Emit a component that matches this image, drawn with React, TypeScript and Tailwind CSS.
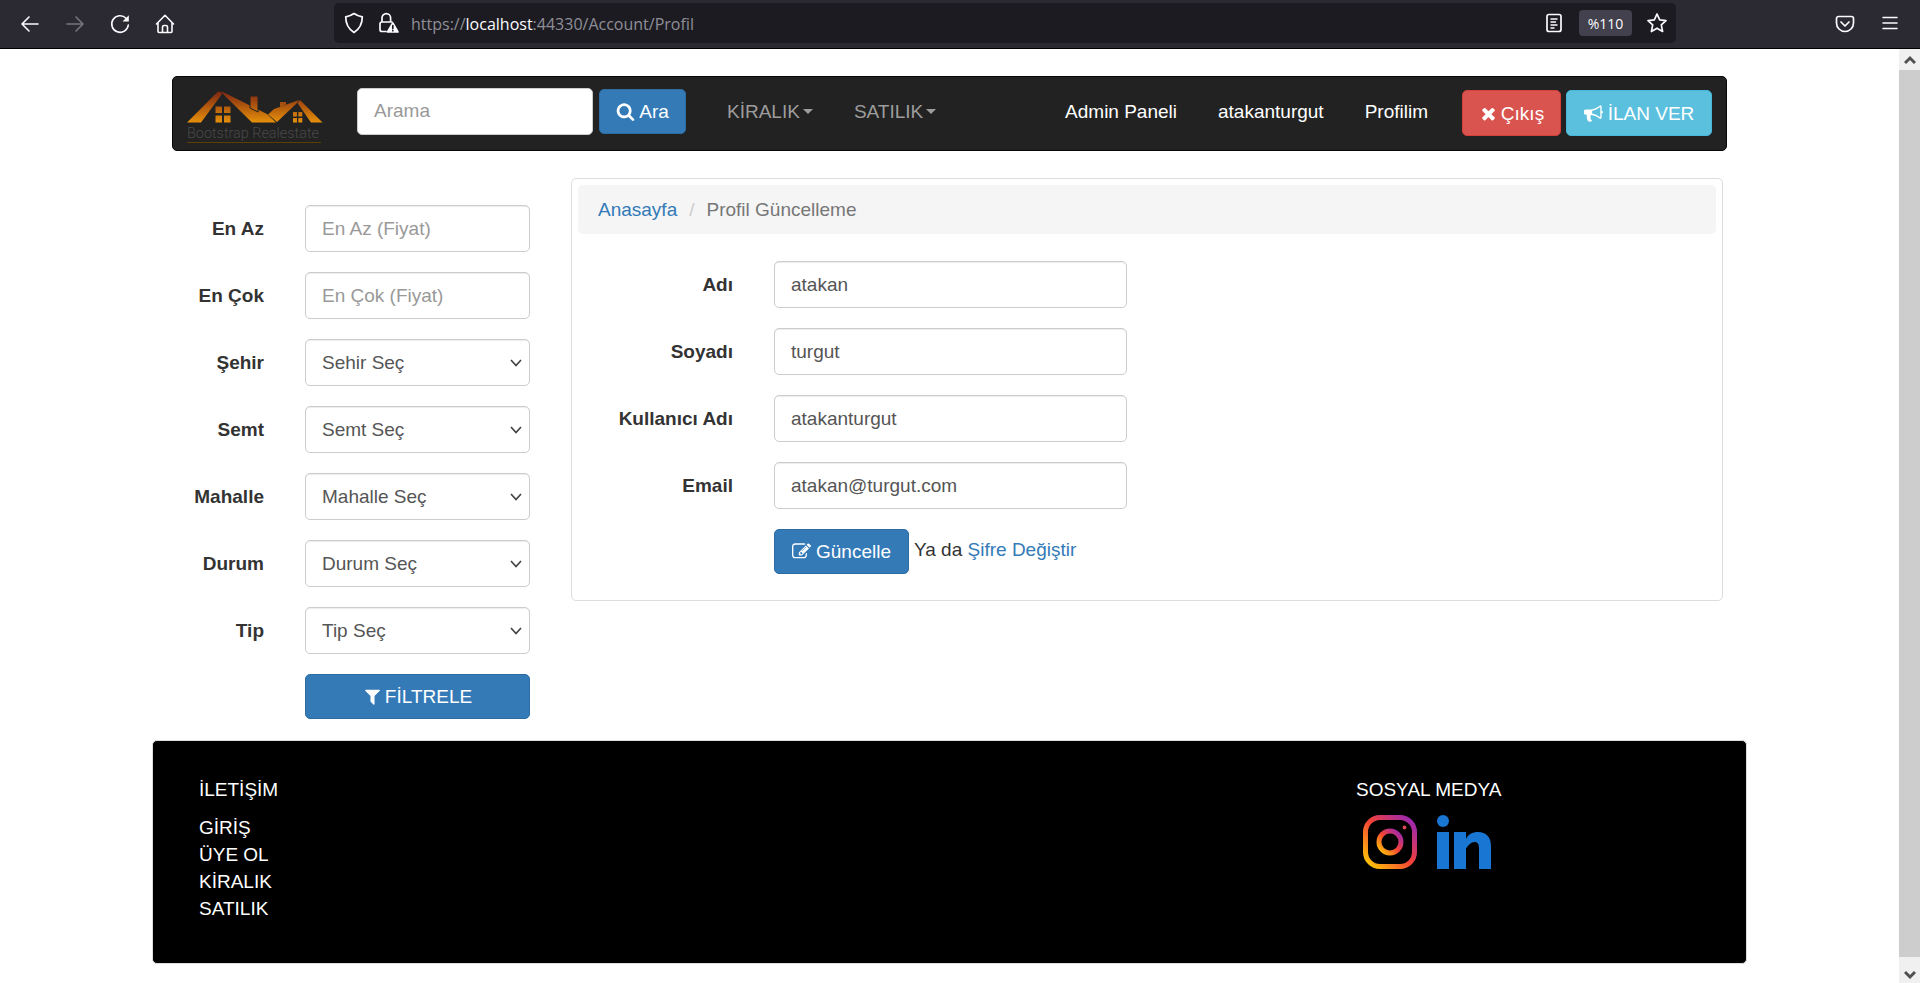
import React from "react";

function Chevron({ up = false }: { up?: boolean }) {
  return (
    <svg viewBox="0 0 12 12" className="h-3 w-3" fill="none" stroke="#505050" strokeWidth="3" aria-hidden="true">
      <path d={up ? "M1 9 6 4l5 5" : "M1 3l5 5 5-5"} />
    </svg>
  );
}

const glyphs = {
  search:
    "M1216 832q0-185-131.500-316.500t-316.500-131.500-316.500 131.500-131.500 316.500 131.500 316.500 316.500 131.500 316.500-131.500 131.500-316.500zm512 832q0 52-38 90t-90 38q-54 0-90-38l-343-342q-179 124-399 124-143 0-273.500-55.500t-225-150-150-225-55.500-273.500 55.500-273.500 150-225 225-150 273.500-55.500 273.500 55.500 225 150 150 225 55.500 273.500q0 220-124 399l343 343q37 37 37 90z",
  times:
    "M1490 1322q0 40-28 68l-136 136q-28 28-68 28t-68-28l-294-294-294 294q-28 28-68 28t-68-28l-136-136q-28-28-28-68t28-68l294-294-294-294q-28-28-28-68t28-68l136-136q28-28 68-28t68 28l294 294 294-294q28-28 68-28t68 28l136 136q28 28 28 68t-28 68l-294 294 294 294q28 28 28 68z",
  bullhorn:
    "M1664 640q53 0 90.500 37.500t37.500 90.500-37.500 90.500-90.500 37.500v384q0 52-38 90t-90 38q-417-347-812-380-58 19-91 66t-31 100.500 40 92.500q-20 33-23 65.500t6 58 33.500 55 48 50 61.500 50.500q-29 58-111.500 83t-168.500 11.500-132-55.500q-7-23-29.500-87.500t-32-94.500-23-89-15-101 3.500-98.500 22-110.500h-122q-66 0-113-47t-47-113v-192q0-66 47-113t113-47h480q435 0 896-384 52 0 90 38t38 90v384zm-128 604v-954q-394 302-768 343v270q377 42 768 341z",
  filter:
    "M1595 295q17 41-14 70l-493 493v742q0 42-39 59-13 5-25 5-27 0-45-19l-256-256q-19-19-19-45v-486l-493-493q-31-29-14-70 17-39 59-39h1280q42 0 59 39z",
  edit:
    "M888 1184l116-116-152-152-116 116v56h96v96h56zm440-720q-16-16-33 1l-350 350q-17 17-1 33t33-1l350-350q17-17 1-33zm80 594v190q0 119-84.500 203.500t-203.500 84.500h-832q-119 0-203.500-84.500t-84.500-203.500v-832q0-119 84.500-203.500t203.500-84.500h832q63 0 117 25 15 7 18 23 3 17-9 29l-49 49q-14 14-32 8-23-6-45-6h-832q-66 0-113 47t-47 113v832q0 66 47 113t113 47h832q66 0 113-47t47-113v-126q0-13 9-22l64-64q15-15 35-7t20 29zm-96-738l288 288-672 672h-288v-288zm444 132l-92 92-288-288 92-92q28-28 68-28t68 28l152 152q28 28 28 68t-28 68z",
};

function Glyph({ name }: { name: keyof typeof glyphs }) {
  return (
    <svg viewBox="0 0 1792 1792" className="h-[19px] w-[19px]" fill="currentColor" aria-hidden="true">
      <path d={glyphs[name]} />
    </svg>
  );
}

const iconButton = "flex h-6 w-6 items-center justify-center text-[#fbfbfe]";

function Toolbar() {
  return (
    <header className="flex h-[49px] shrink-0 items-center border-b border-black bg-[#2b2a33] font-['Open_Sans',sans-serif]">
      <nav aria-label="Gezinme" className="flex w-[334px] shrink-0 items-center gap-[21px] pl-[18px]">
        <button type="button" aria-label="Geri" className={iconButton}>
          <svg viewBox="0 0 24 24" className="h-6 w-6" fill="none" stroke="currentColor" strokeWidth="1.6" strokeLinecap="round" strokeLinejoin="round"><path d="M20 12H4M11 5l-7 7 7 7" /></svg>
        </button>
        <button type="button" aria-label="İleri" className="flex h-6 w-6 items-center justify-center text-[#76757c]">
          <svg viewBox="0 0 24 24" className="h-6 w-6" fill="none" stroke="currentColor" strokeWidth="1.6" strokeLinecap="round" strokeLinejoin="round"><path d="M4 12h16M13 5l7 7-7 7" /></svg>
        </button>
        <button type="button" aria-label="Yenile" className={iconButton}>
          <svg viewBox="0 0 24 24" className="h-6 w-6" fill="none" stroke="currentColor" strokeWidth="1.6" strokeLinecap="round"><path d="M18 6.200A8.300 8.300 0 1 0 20.300 13" /><path d="M20.800 3.200v6.300h-6.300z" fill="currentColor" stroke="none" /></svg>
        </button>
        <button type="button" aria-label="Ana sayfa" className={iconButton}>
          <svg viewBox="0 0 24 24" className="h-6 w-6" fill="none" stroke="currentColor" strokeWidth="1.6" strokeLinecap="round" strokeLinejoin="round"><path d="M3.500 12 12 3.300l8.500 8.700M5 11v8.500a1 1 0 0 0 1 1h12a1 1 0 0 0 1-1V11M9.500 20v-5a1.500 1.500 0 0 1 1.500-1.500h2a1.500 1.500 0 0 1 1.500 1.500v5" /></svg>
        </button>
      </nav>
      <div className="mb-[2px] flex h-10 grow items-center rounded-[5px] bg-[#1c1b22] pr-[7px] pl-2">
        <svg viewBox="0 0 24 24" className="h-6 w-6 text-[#fbfbfe]" fill="none" stroke="currentColor" strokeWidth="1.7" strokeLinejoin="round" aria-hidden="true"><path d="M12 2.500c2.500 1.800 5 2.800 8.300 3.300 0 7-2.300 12-8.300 15.700C6 17.800 3.700 12.800 3.700 5.800 7 5.300 9.500 4.300 12 2.500z" /></svg>
        <svg viewBox="0 0 24 24" className="ml-[10px] h-6 w-6 text-[#fbfbfe]" fill="none" stroke="currentColor" strokeWidth="1.7" strokeLinecap="round" aria-hidden="true"><path d="M6 11V7a4.300 4.300 0 0 1 8.600 0v4M10 20.500H6a2 2 0 0 1-2-2V13a2 2 0 0 1 2-2h10" /><path d="M16.800 12 22 21h-10.500z" fill="currentColor" strokeLinejoin="round" /><path d="M16.800 14.500v3M16.800 19.600v.1" stroke="#1c1b22" /></svg>
        <p className="ml-[11px] grow pt-[2px] text-[16px] leading-6 text-[#8f8f97]">https://<span className="text-[#fbfbfe]">localhost</span>:44330/Account/Profil</p>
        <svg viewBox="0 0 24 24" className="h-6 w-6 text-[#fbfbfe]" fill="none" stroke="currentColor" strokeWidth="1.7" strokeLinecap="round" aria-hidden="true"><rect x="5" y="3.500" width="14" height="17" rx="2" /><path d="M9 8h6M9 11h4.500M9 14h6M9 17h3" strokeWidth="1.500" /></svg>
        <button type="button" className="ml-[13px] h-[26px] w-[53px] rounded-[4px] bg-[#42414d] text-[14px] text-[#fbfbfe]">%110</button>
        <svg viewBox="0 0 24 24" className="ml-[13px] h-6 w-6 text-[#fbfbfe]" fill="none" stroke="currentColor" strokeWidth="1.7" strokeLinejoin="round" aria-hidden="true"><path d="m12 3 2.700 5.900 6.300.7-4.700 4.300 1.300 6.600-5.600-3.300-5.600 3.300 1.300-6.600L3 9.600l6.300-.7z" /></svg>
      </div>
      <div className="flex w-[244px] shrink-0 items-center justify-end gap-[21px] pr-[18px]">
        <button type="button" aria-label="Pocket" className={iconButton}>
          <svg viewBox="0 0 24 24" className="h-6 w-6" fill="none" stroke="currentColor" strokeWidth="1.7" strokeLinecap="round" strokeLinejoin="round"><path d="M5.500 4.500h13a2 2 0 0 1 2 2V11a8.500 8.500 0 0 1-17 0V6.500a2 2 0 0 1 2-2zM8 10l4 4 4-4" /></svg>
        </button>
        <button type="button" aria-label="Menü" className={iconButton}>
          <svg viewBox="0 0 24 24" className="h-6 w-6" fill="none" stroke="currentColor" strokeWidth="1.500" strokeLinecap="round"><path d="M5 5.500h14M5 11h14M5 16.500h14" /></svg>
        </button>
      </div>
    </header>
  );
}

function Logo() {
  return (
    <svg viewBox="0 0 136 53" className="h-[53px] w-[136px]" role="img" aria-label="Bootstrap Realestate">
      <defs>
        <linearGradient id="roof" gradientUnits="userSpaceOnUse" x1="0" y1="0" x2="0" y2="32">
          <stop offset="0" stopColor="#7c2413" />
          <stop offset="1" stopColor="#e8920a" />
        </linearGradient>
      </defs>
      <g fill="url(#roof)">
        <path d="M0 31.500 31 .5l3 .5 1 2L14 31.500z" />
        <path d="M34 0 80 23l9 8.500H65L36 3z" />
        <path d="M63 5h8v16l-8-4z" stroke="#222" strokeWidth="1" />
        <path d="M81 23.500 87 18l25-9-2 3-20 19z" />
        <path d="m113 9 22.500 22.500H124L110.500 12z" />
        <path d="M93 11h6v2.500L93 16z" />
        <path d="M28.500 15.500h6.500v6.500h-6.500zM37 15.500h6.500v6.500H37zM28.500 24.500h6.500v7h-6.500zM37 24.500h6.500v7H37z" />
        <path d="M106 21h4v4.500h-4zM111.300 21h4v4.500h-4zM106 27h4v4.500h-4zM111.300 27h4v4.500h-4z" />
      </g>
      <text x="0" y="47" fontSize="14.400" fontFamily="Roboto, sans-serif" fontWeight="300" fill="#484848">Bootstrap Realestate</text>
      <path d="M0 51.500h134" stroke="#5b3d05" />
    </svg>
  );
}

function Caret() {
  return <span aria-hidden="true" className="ml-[3px] h-0 w-0 border-x-[5px] border-t-[5px] border-x-transparent border-t-current" />;
}

function Navbar() {
  return (
    <nav aria-label="Ana menü" className="mx-5 flex h-[75px] items-center rounded-[5px] border border-[#080808] bg-[#222] px-[14px] pb-[5px]">
      <a href="#anasayfa" className="mt-3 shrink-0"><Logo /></a>
      <form className="ml-[34px] flex shrink-0 items-center gap-[6px]" onSubmit={(e) => e.preventDefault()}>
        <input aria-label="Arama" placeholder="Arama" className="h-[47px] w-[236px] rounded-[5px] border border-[#ccc] bg-white px-4 text-[#555] placeholder:text-[#999]" />
        <button type="submit" className="flex h-[45px] w-[87px] items-center justify-center gap-1 rounded-[5px] border border-[#2e6da4] bg-[#337ab7] text-white">
          <Glyph name="search" />Ara
        </button>
      </form>
      <div className="ml-[41px] flex shrink-0 gap-[41px] text-[#9d9d9d]">
        <a href="#kiralik" className="flex items-center">KİRALIK<Caret /></a>
        <a href="#satilik" className="flex items-center">SATILIK<Caret /></a>
      </div>
      <div className="mr-[34px] ml-auto flex shrink-0 gap-[41px] text-white">
        <a href="#admin">Admin Paneli</a>
        <a href="#kullanici">atakanturgut</a>
        <a href="#profil">Profilim</a>
      </div>
      <div className="mt-1 flex shrink-0 gap-[5px] text-white">
        <a href="#cikis" className="flex h-[46px] w-[99px] items-center justify-center gap-[3px] rounded-[5px] border border-[#d43f3a] bg-[#d9534f]"><Glyph name="times" />Çıkış</a>
        <a href="#ilan" className="flex h-[46px] w-[146px] items-center justify-center gap-[5px] rounded-[5px] border border-[#46b8da] bg-[#5bc0de]"><Glyph name="bullhorn" />İLAN VER</a>
      </div>
    </nav>
  );
}

const field =
  "block h-[47px] w-full appearance-none rounded-[5px] border border-[#ccc] bg-white px-4 text-[#555] shadow-[inset_0_1px_1px_rgba(0,0,0,0.075)] placeholder:text-[#999]";

const prices = [
  { id: "enaz", label: "En Az", hint: "En Az (Fiyat)" },
  { id: "encok", label: "En Çok", hint: "En Çok (Fiyat)" },
];

const choices = [
  { id: "sehir", label: "Şehir", hint: "Sehir Seç" },
  { id: "semt", label: "Semt", hint: "Semt Seç" },
  { id: "mahalle", label: "Mahalle", hint: "Mahalle Seç" },
  { id: "durum", label: "Durum", hint: "Durum Seç" },
  { id: "tip", label: "Tip", hint: "Tip Seç" },
];

function Filters() {
  return (
    <form className="grid w-[378px] shrink-0 grid-cols-[112px_225px] content-start items-center gap-x-[41px] gap-y-5 pt-[27px]" onSubmit={(e) => e.preventDefault()}>
      {prices.map((p) => (
        <React.Fragment key={p.id}>
          <label htmlFor={p.id} className="text-right font-bold">{p.label}</label>
          <input id={p.id} placeholder={p.hint} className={field} />
        </React.Fragment>
      ))}
      {choices.map((c) => (
        <React.Fragment key={c.id}>
          <label htmlFor={c.id} className="text-right font-bold">{c.label}</label>
          <div className="relative">
            <select id={c.id} className={field}><option>{c.hint}</option></select>
            <svg viewBox="0 0 12 8" className="pointer-events-none absolute top-5 right-2 h-2 w-3" fill="none" stroke="#444" strokeWidth="1.700" aria-hidden="true"><path d="M1 1l5 5.500L11 1" /></svg>
          </div>
        </React.Fragment>
      ))}
      <button type="submit" className="col-start-2 flex h-[45px] items-center justify-center gap-[3px] rounded-[5px] border border-[#2e6da4] bg-[#337ab7] text-white">
        <Glyph name="filter" />FİLTRELE
      </button>
    </form>
  );
}

const profile = [
  { id: "ad", label: "Adı", value: "atakan" },
  { id: "soyad", label: "Soyadı", value: "turgut" },
  { id: "kullanici", label: "Kullanıcı Adı", value: "atakanturgut" },
  { id: "email", label: "Email", value: "atakan@turgut.com" },
];

function Profile() {
  return (
    <main className="grow rounded-[5px] border border-[#ddd] px-[6px] pt-[6px] pb-[26px]">
      <nav aria-label="Sayfa yolu" className="flex h-[49px] items-center rounded-[5px] bg-[#f5f5f5] px-5 text-[#777]">
        <a href="#anasayfa" className="text-[#337ab7]">Anasayfa</a>
        <span className="mx-3 text-[#ccc]">/</span>
        <span>Profil Güncelleme</span>
      </nav>
      <form className="mt-[27px] grid grid-cols-[155px_353px] items-center gap-x-[41px] gap-y-5" onSubmit={(e) => e.preventDefault()}>
        {profile.map((p) => (
          <React.Fragment key={p.id}>
            <label htmlFor={p.id} className="text-right font-bold">{p.label}</label>
            <input id={p.id} defaultValue={p.value} className={field} />
          </React.Fragment>
        ))}
        <div className="col-start-2 flex items-center gap-[5px]">
          <button type="submit" className="flex h-[45px] w-[135px] items-center justify-center gap-[5px] rounded-[5px] border border-[#2e6da4] bg-[#337ab7] text-white">
            <Glyph name="edit" />Güncelle
          </button>
          <p className="pb-1">Ya da <a href="#sifre" className="text-[#337ab7]">Şifre Değiştir</a></p>
        </div>
      </form>
    </main>
  );
}

function Instagram() {
  return (
    <svg viewBox="0 0 54 54" className="h-[54px] w-[54px]" aria-hidden="true">
      <defs>
        <linearGradient id="insta" gradientUnits="userSpaceOnUse" x1="5" y1="49" x2="49" y2="5">
          <stop offset="0" stopColor="#ffc107" />
          <stop offset=".5" stopColor="#f44336" />
          <stop offset="1" stopColor="#9c27b0" />
        </linearGradient>
        <linearGradient id="lens" gradientUnits="userSpaceOnUse" x1="17" y1="37" x2="37" y2="17">
          <stop offset="0" stopColor="#ffc107" />
          <stop offset=".5" stopColor="#f44336" />
          <stop offset="1" stopColor="#9c27b0" />
        </linearGradient>
      </defs>
      <rect x="2.500" y="2.500" width="49" height="49" rx="14.500" fill="none" stroke="url(#insta)" strokeWidth="5" />
      <circle cx="27" cy="27" r="11" fill="none" stroke="url(#lens)" strokeWidth="5" />
      <circle cx="41.500" cy="12.500" r="1.900" fill="#e0485a" />
    </svg>
  );
}

function LinkedIn() {
  return (
    <svg viewBox="0 0 54 54" className="h-[54px] w-[54px]" fill="#1976d2" aria-hidden="true">
      <circle cx="6" cy="6" r="6" />
      <path d="M0 17h12v37H0zM17 17h12v7c2-4.500 6.500-7 12-7 8 0 13 5 13 14v23H42V33c0-4.500-2-6-4.500-6-3.500 0-6 3-8.500 6.500V54H17z" />
    </svg>
  );
}

function Footer() {
  return (
    <footer className="mt-[21px] flex h-[224px] justify-between rounded-[5px] border border-[#ddd] bg-black pt-[35px] pr-[234px] pl-[46px] text-white">
      <div>
        <h2>İLETİŞİM</h2>
        <ul className="mt-[11px]">
          <li><a href="#giris">GİRİŞ</a></li>
          <li><a href="#uye">ÜYE OL</a></li>
          <li><a href="#kiralik">KİRALIK</a></li>
          <li><a href="#satilik">SATILIK</a></li>
        </ul>
      </div>
      <div className="w-[156px]">
        <h2 className="whitespace-nowrap">SOSYAL MEDYA</h2>
        <div className="mt-3 flex gap-5 pl-[7px]">
          <a href="#instagram" aria-label="Instagram"><Instagram /></a>
          <a href="#linkedin" aria-label="LinkedIn"><LinkedIn /></a>
        </div>
      </div>
    </footer>
  );
}

export default function App() {
  return (
    <div className="flex h-screen flex-col bg-white font-['Liberation_Sans',Arial,sans-serif] text-[19px] leading-[27px] text-[#333]">
      <Toolbar />
      <div className="flex min-h-0 grow">
        <div className="grow overflow-hidden pt-[27px]">
          <div className="mx-auto max-w-[1595px]">
            <Navbar />
            <div className="mt-[27px] flex items-start gap-[41px] pr-6">
              <Filters />
              <Profile />
            </div>
            <Footer />
          </div>
        </div>
        <div aria-hidden="true" className="flex w-[21px] shrink-0 flex-col bg-[#f0f0f0]">
          <div className="flex h-[21px] items-center justify-center"><Chevron up /></div>
          <div className="grow bg-[#cdcdcd]" />
          <div className="flex h-[26px] items-center justify-center pt-[10px]"><Chevron /></div>
        </div>
      </div>
    </div>
  );
}
